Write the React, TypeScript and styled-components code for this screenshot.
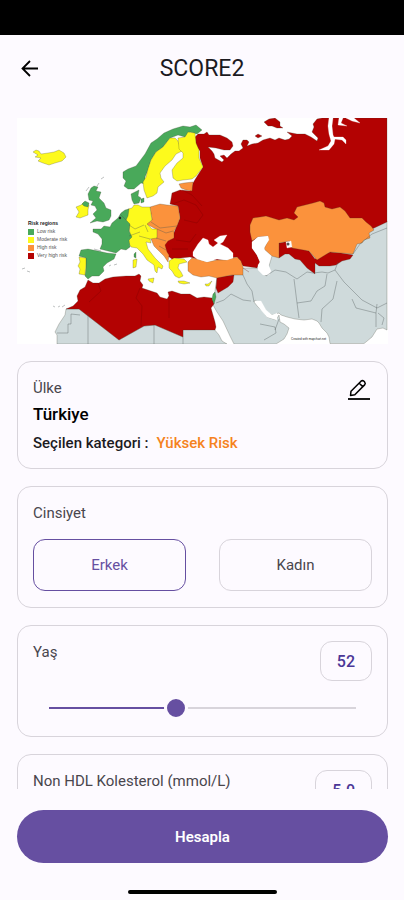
import React, { useState } from "react";
import styled, { createGlobalStyle } from "styled-components";

const color = {
  page: "#fdfaff",
  ink: "#1c1b1f",
  label: "#49464d",
  line: "#d8d4db",
  primary: "#664fa1",
  primaryDark: "#4b3797",
  orange: "#f58220",
};

const GlobalStyle = createGlobalStyle`
  * { box-sizing: border-box; }
  body {
    margin: 0;
    background: ${color.page};
    font-family: Roboto, "Liberation Sans", sans-serif;
    color: ${color.ink};
  }
  button, input { font: inherit; }
`;

const Screen = styled.div`
  display: flex;
  flex-direction: column;
  height: 100vh;
  overflow: hidden;
`;

const StatusBar = styled.div`
  flex: none;
  height: 35px;
  background: #000;
`;

const Header = styled.header`
  flex: none;
  display: grid;
  grid-template-columns: 48px 1fr 48px;
  align-items: center;
  height: 68px;
  padding: 0 6px;
`;

const IconButton = styled.button`
  display: grid;
  place-items: center;
  padding: 0;
  border: 0;
  background: none;
  color: #000;
  cursor: pointer;
`;

const EditButton = styled(IconButton)`
  margin: 2px 2px 0 0;
`;

const Title = styled.h1`
  margin: 0;
  font-size: 23px;
  line-height: 28px;
  font-weight: 400;
  text-align: center;
`;

const Content = styled.main`
  flex: 1;
  min-height: 0;
  display: flex;
  flex-direction: column;
  gap: 17px;
  margin-top: 15px;
  padding: 0 16px 0 17px;
  overflow-y: auto;
  scrollbar-width: none;
`;

const MapPicture = styled.svg`
  flex: none;
  display: block;
  width: 100%;
  background: #fff;
`;

const Card = styled.section`
  flex: none;
  padding: 15px;
  border: 1px solid ${color.line};
  border-radius: 14px;
`;

const CardTop = styled.div`
  display: flex;
  justify-content: space-between;
  align-items: flex-start;
`;

const Label = styled.label`
  display: block;
  font-size: 15px;
  line-height: 22px;
  color: ${color.label};
`;

const GroupLabel = styled(Label).attrs({ as: "h2" })`
  margin: 0;
  font-weight: 400;
`;

const Country = styled.p`
  margin: 3px 0 0;
  font-size: 17px;
  line-height: 24px;
  font-weight: 500;
  color: #000;
`;

const Category = styled.p`
  display: flex;
  gap: 8px;
  margin: 7px 0 0;
  font-size: 15px;
  line-height: 20px;
  font-weight: 500;
`;

const Risk = styled.span`
  color: ${color.orange};
`;

const Choices = styled.div`
  display: grid;
  grid-template-columns: 1fr 1fr;
  gap: 33px;
  margin: 15px 0 1px;
`;

const Choice = styled.button<{ $selected: boolean }>`
  height: 52px;
  border: 1px solid ${(p) => (p.$selected ? color.primary : color.line)};
  border-radius: 12px;
  background: none;
  font-size: 15px;
  color: ${(p) => (p.$selected ? color.primary : color.label)};
  cursor: pointer;
`;

const Value = styled.output`
  display: grid;
  place-items: center;
  height: 40px;
  padding: 0 16px;
  border: 1px solid ${color.line};
  border-radius: 12px;
  font-size: 16px;
  font-weight: 500;
  color: ${color.primaryDark};
`;

const Slider = styled.input`
  appearance: none;
  display: block;
  width: calc(100% - 8px);
  height: 24px;
  margin: 15px 4px 1px;
  background: none;
  cursor: pointer;

  &::-webkit-slider-runnable-track {
    height: 24px;
    background:
      linear-gradient(
          to right,
          ${color.primary} var(--filled),
          ${color.line} var(--filled)
        )
        center / calc(100% - 24px) 2px no-repeat;
  }

  &::-webkit-slider-thumb {
    appearance: none;
    width: 24px;
    height: 24px;
    border: 3px solid ${color.page};
    border-radius: 50%;
    background: ${color.primary};
  }
`;

const Footer = styled.footer`
  flex: none;
  display: flex;
  flex-direction: column;
  align-items: center;
  padding: 21px 16px 6px 17px;
`;

const Submit = styled.button`
  width: 100%;
  height: 53px;
  border: 0;
  border-radius: 27px;
  background: ${color.primary};
  font-size: 15px;
  font-weight: 600;
  color: #fff;
  cursor: pointer;
`;

const HomeBar = styled.div`
  width: 149px;
  height: 4px;
  margin-top: 27px;
  border-radius: 2px;
  background: #000;
`;

const fills = {
  low: "#49a95a",
  moderate: "#fdfa1c",
  high: "#fb923c",
  veryHigh: "#b30202",
  none: "#cfdadb",
  sea: "#ffffff",
};

type Shape = [keyof typeof fills, string];

const shapes: Shape[] = [
  // Middle East, Iran, South Asia and western China
  ["none", "M217 277L234 275 243 268 258 268 266 276 272 256 285 240 370 228 387 221V330L383 328 377 329 372 337 364 343.600H330L329 337 327 333 322 328 319 323 317 321 312 319 304 320 295 319 287 317 281 315 279 313 272 315 265 311 260 304 255 300 254 302 258 307 263 311 267 317 276 320 279 315 280 322 284 324 289 328 287 334 284 339 276 344H234L230 336 223 321 217 312 213 305Z"],
  // Sahara and the Atlantic coast
  ["none", "M66 309H79L119 340 144 326 155 325 183 337V329H214L219 335 222 341 227 344H57V335L55 332 59 324 65 315Z"],
  // Russia and eastern Europe
  ["veryHigh", "M195 137L198 134 204 134 207 132 209 135 220 135 227 138 232 142 233 146 230 150 224 150 216 148 208 147 212 151 214 154 215 158 222 162 224 160 220 156 224 155 227 158 231 154 235 151 239 151 243 148 241 144 243 140 247 140 249 142 247 146 252 144 258 143 263 140 270 138 275 140 279 138 285 140 289 139 292 136 287 132 297 134 305 134 311 137 317 141 318 138 312 132 314 127 313 124 317 119 322 118H387V222L372 229 352 219 300 235 268 236 258 237 252 242 252 248 257 255 260 262 257 268 243 266 237 257 217 260 197 259 190 257 172 259 165 254 164 242 172 238 177 225 180 218 178 206 170 204 171 199 172 193 180 190 190 191 193 183 196 178 203 167 200 158 200 151 196 146Z"],
  ["veryHigh", "M264 122L269 119 275 118 280 122 280 126 283 128 277 128 272 126 268 126Z"],
  ["veryHigh", "M255 136L258 134 262 136 258 138Z"],
  // North Africa
  ["veryHigh", "M88 280L93 283 99 283 105 279 113 277 126 276 135 276 139 274 141 276 140 281 143 285 142 288 148 290 157 293 160 297 167 299 169 296 168 292 172 291 181 294 190 294 197 298 204 297 212 298 214 304 211 308 215 322 216 327 215 330H183V337L155 325 144 326 119 340 79 309H66L73 306 78 301 77 296 80 290 85 287Z"],
  ["veryHigh", "M217 277L234 275 233 282 228 287 218 293 216 288Z"],
  ["veryHigh", "M279 243L290 241 292 248 300 248 309 251 315 259 323 255 330 252 341 253 353 255 350 259 342 261 336 265 330 266 319 266 315 263 315 274 307 268 300 260 295 259 289 254 285 254 279 258Z"],
  ["high", "M252 241L250 232 250 225 253 218 260 217 266 216 279 220 287 218 294 220 298 217 294 213 297 207 305 205 313 203 320 201 324 203 325 207 332 209 340 207 345 211 350 218 362 218 366 222 371 226 374 230 369 233 370 238 364 240 362 243 357 244 353 254 341 253 330 252 317 260 309 251 292 248 290 241 279 243V258L272 256 264 249 268 241 268 236 258 237Z"],
  ["high", "M188 262L192 258 197 259 207 262 217 260 226 260 237 257 241 261 243 267 243 275 232 275 217 278 209 276 201 277 193 275 188 271Z"],
  ["high", "M179 184L184 183 193 182 192 191 186 190 181 188Z"],
  // Poland, Czechia, Hungary and the Balkans
  ["high", "M150 207L160 204 167 205 178 206 180 218 177 226 174 231 174 238 168 241 165 245 167 252 169 255 168 262 164 256 159 251 154 246 151 239 156 236 156 229 146 224 152 220Z"],
  // Germany, Austria, Switzerland and Italy
  ["moderate", "M128 209L132 208 134 205 138 205 142 207 150 207 152 220 147 224 152 229 157 229 157 238 150 239 151 243 146 242 148 249 155 258 163 266 162 269 158 267 157 273 155 271 154 265 147 260 143 254 137 248 131 247 128 242 130 236 129 225 126 220Z"],
  ["moderate", "M148 279L154 278 153 283 149 281Z"],
  ["moderate", "M133 260L137 259 136 267 133 268Z"],
  ["moderate", "M169 261L174 258 184 259 187 262 179 264 178 268 181 272 183 276 179 278 175 276 172 271 169 268Z"],
  ["moderate", "M178 281L184 281 190 283 184 284 179 283Z"],
  ["moderate", "M205 284L208 284 212 281 209 286 206 286Z"],
  ["low", "M213 294L215 292 216 297 214 304 212 299Z"],
  ["low", "M134 254L136 252 136 258 134 257Z"],
  // France and the Low Countries
  ["low", "M112 223L118 218 121 213 125 210 129 209 128 216 126 220 130 224 129 231 132 237 129 240 130 247 126 250 121 249 116 253 108 251 100 249 102 244 102 239 98 234 93 232 93 229 101 229 104 226 110 227Z"],
  ["low", "M81 250L88 249 98 251 107 253 116 254 114 259 107 263 103 267 104 271 99 276 92 276 88 279 85 276 86 268 86 258 79 256Z"],
  ["moderate", "M79 257L86 258 86 264 85 275 79 274 80 269 78 266 80 262Z"],
  // British Isles
  ["low", "M91 188L94 186 98 187 96 191 101 192 99 198 104 203 106 208 111 210 111 216 109 220 103 222 97 221 90 223 96 218 93 214 97 210 95 206 91 205 93 201 89 200 88 194Z"],
  ["moderate", "M76 207L81 205 84 202 89 205 88 210 88 215 80 218 76 217 79 212Z"],
  ["low", "M82 204L85 201 89 203 88 207 84 206Z"],
  ["moderate", "M33 152L36 150 39 151 41 154 48 153 54 152 59 150 64 153 66 157 62 161 55 163 49 165 43 163 38 161 41 158 35 157 38 155Z"],
  // Scandinavia
  ["low", "M123 172L128 169 136 166 145 154 151 143 157 139 164 133 173 129 183 126 190 127 196 125 202 130 197 134 190 132 185 137 178 135 170 138 163 147 156 152 151 160 148 170 145 177 145 184 141 183 134 189 128 189 124 186 126 181 123 178Z"],
  ["moderate", "M170 138L175 138 178 141 182 151 176 154 172 160 165 166 160 173 161 178 164 182 158 187 157 193 153 196 147 198 144 190 143 182 146 177 148 169 151 160 156 152 163 147Z"],
  ["moderate", "M178 138L185 137 188 132 195 133 196 143 199 150 199 158 203 167 196 176 192 179 183 180 177 181 173 178 172 170 177 163 183 158 183 153 179 149Z"],
  ["low", "M131 194L135 192 139 190 138 196 141 198 139 203 134 204 132 200Z"],
  ["low", "M141 199L144 198 144 202 141 203Z"],
  // Black Sea, Azov, Caspian, Aral
  ["sea", "M193 252L198 244 203 238 208 240 209 244 213 247 218 243 214 240 220 236 227 235 223 242 220 244 228 248 233 253 233 258 227 260 217 259 207 262 197 259 193 256Z"],
  ["sea", "M252 242L258 237 268 236 269 240 264 247 265 253 269 258 268 264 271 271 269 275 263 275 258 270 258 265 260 262 257 255 252 248Z"],
  ["sea", "M286 242L291 241 292 247 287 248Z"],
  ["sea", "M255 301L261 301 266 310 272 315 277 313 277 320 267 317 261 310Z"],
  // Gulf of Ob and the neighbouring inlets
  ["sea", "M329 118H333L332 126 333 135 335 139 334 144 329 150 319 150 328 146 331 141 329 134 328 126Z"],
  ["sea", "M334 137L343 137 346 140 346 144 342 140 334 139Z"],
  ["sea", "M339 118H343L341 123 347 126 338 125Z"],
  ["sea", "M346 118H354L360 123 352 121Z"],
];

const borders = [
  "M57 333H68V324H71V314L80 315M88 344V313M154 325V344M183 337V344",
  "M243 275L247 284 252 291 254 302M216 303L224 300 231 294 243 300 251 301M266 276L275 270 286 272 297 279 307 272 313 273 322 272 328 273 335 270 344 282 352 290 362 300 377 308 387 303",
  "M294 279L297 303 299 318M297 303L311 301 317 291 325 286 327 274M337 281L333 299 322 309 321 322M335 270L338 262M352 299L356 308 376 313 377 304M376 313V327M378 313L384 318 382 325",
  "M260 324L275 327 276 333 264 340M279 319L275 330M353 254L360 244 372 234 387 228",
  "M129 225L135 229 144 225M139 236L150 239M120 214L126 220M94 249L101 251M151 222L160 228 177 226M157 229L166 233 173 231M156 238L166 241M159 246L166 250M129 236L140 232M145 225L148 232",
];

const faintBorders =
  "M98 283L101 291 89 302M140 288L136 298 142 306 141 326M169 296V318M172 204L184 200 196 205 203 215 197 223 184 220M182 190L192 195 202 206M176 240L190 242 196 234M172 249H188M243 268L249 272";

const smallIslands =
  "M22 269l3-1M27 271l3 1M53 306l2 1M58 307l2-1M62 307l3-2M109 266l2-1M114 265l3-1M86 191l3-4M97 186l2-3M101 179l3-2";

const legend: Shape[] = [
  ["low", "Low risk"],
  ["moderate", "Moderate risk"],
  ["high", "High risk"],
  ["veryHigh", "Very high risk"],
];

function RiskMap() {
  return (
    <MapPicture viewBox="17 118 371 226" role="img" aria-label="Risk regions">
      {shapes.map(([kind, d]) => (
        <path
          key={d}
          d={d}
          fill={fills[kind]}
          stroke={kind === "sea" ? fills.sea : "#3d3d2c"}
          strokeOpacity={0.5}
          strokeWidth={0.5}
          strokeLinejoin="round"
        />
      ))}
      <g fill="none" stroke="#4a5050" strokeWidth={0.6} strokeOpacity={0.6}>
        {borders.map((d) => (
          <path key={d} d={d} />
        ))}
        <path d={smallIslands} />
      </g>
      <path d={faintBorders} fill="none" stroke="#6e0000" strokeWidth={0.6} strokeOpacity={0.5} />
      <circle cx="120" cy="218" r="1.200" fill="#222" />
      <circle cx="288" cy="244" r="1.500" fill="#555" />
      <g fontFamily="Liberation Sans, sans-serif" fontSize="5" fill="#222">
        <text x="28" y="225" fontWeight="700">
          Risk regions
        </text>
        {legend.map(([kind, name], i) => (
          <g key={name}>
            <rect x="28" y={229 + i * 8} width="6" height="6" fill={fills[kind]} />
            <text x="37" y={233 + i * 8} fill="#555">
              {name}
            </text>
          </g>
        ))}
        <text x="291" y="340" fontSize="3">
          Created with mapchart.net
        </text>
      </g>
    </MapPicture>
  );
}

function BackIcon() {
  return (
    <svg width="18" height="18" viewBox="0 0 18 18" fill="none" stroke="currentColor" strokeWidth="1.800">
      <path d="M17 8.500H2M9 1L1.500 8.500 9 16" />
    </svg>
  );
}

function EditIcon() {
  return (
    <svg width="22" height="22" viewBox="0 0 22 22" fill="none" stroke="currentColor" strokeWidth="1.500" strokeLinejoin="round">
      <path d="M2.500 16.500L3 12.200 13 2.200Q14.500 1 16 2.300L16.600 2.900Q17.900 4.400 16.600 5.900L6.800 15.800ZM11.300 4.200L14.700 7.600" />
      <path d="M0 20H22" strokeWidth="1.800" />
    </svg>
  );
}

interface RangeCardProps {
  id: string;
  label: string;
  min: number;
  max: number;
  step: number;
  initial: number;
  digits?: number;
}

function RangeCard({ id, label, min, max, step, initial, digits = 0 }: RangeCardProps) {
  const [value, setValue] = useState(initial);
  const filled = `${((value - min) / (max - min)) * 100}%`;
  return (
    <Card>
      <CardTop>
        <Label htmlFor={id}>{label}</Label>
        <Value htmlFor={id}>{value.toFixed(digits)}</Value>
      </CardTop>
      <Slider
        id={id}
        type="range"
        min={min}
        max={max}
        step={step}
        value={value}
        onChange={(e) => setValue(Number(e.target.value))}
        style={{ "--filled": filled } as React.CSSProperties}
      />
    </Card>
  );
}

export default function App() {
  const [sex, setSex] = useState("Erkek");
  return (
    <>
      <GlobalStyle />
      <Screen>
        <StatusBar />
        <Header>
          <IconButton aria-label="Geri">
            <BackIcon />
          </IconButton>
          <Title>SCORE2</Title>
        </Header>
        <Content>
          <RiskMap />
          <Card>
            <CardTop>
              <div>
                <GroupLabel>Ülke</GroupLabel>
                <Country>Türkiye</Country>
              </div>
              <EditButton aria-label="Ülkeyi düzenle">
                <EditIcon />
              </EditButton>
            </CardTop>
            <Category>
              Seçilen kategori : <Risk>Yüksek Risk</Risk>
            </Category>
          </Card>
          <Card>
            <GroupLabel>Cinsiyet</GroupLabel>
            <Choices>
              {["Erkek", "Kadın"].map((name) => (
                <Choice
                  key={name}
                  type="button"
                  $selected={sex === name}
                  aria-pressed={sex === name}
                  onClick={() => setSex(name)}
                >
                  {name}
                </Choice>
              ))}
            </Choices>
          </Card>
          <RangeCard id="age" label="Yaş" min={40} max={69} step={1} initial={52} />
          <RangeCard
            id="cholesterol"
            label="Non HDL Kolesterol (mmol/L)"
            min={3}
            max={7}
            step={0.1}
            initial={5}
            digits={1}
          />
        </Content>
        <Footer>
          <Submit type="button">Hesapla</Submit>
          <HomeBar />
        </Footer>
      </Screen>
    </>
  );
}
